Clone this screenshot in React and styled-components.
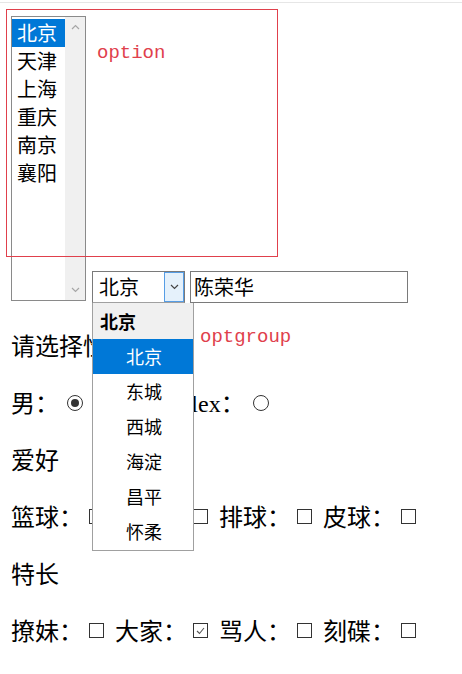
import React from 'react';
import styled, { createGlobalStyle } from 'styled-components';

const GlobalStyle = createGlobalStyle`
  body {
    margin: 0;
    background: #fff;
    color: #000;
    font-family: "Liberation Serif", "Noto Sans CJK SC", serif;
  }
`;

const cjk = `"Noto Sans CJK SC", "Microsoft YaHei", sans-serif`;

const TopRule = styled.div`
  height: 1px;
  margin-top: 2px;
  background: #e6e6e6;
`;

const Canvas = styled.div`
  position: relative;
  padding: 13px 0 0 11px;
`;

const RedBox = styled.div`
  position: absolute;
  left: 6px;
  top: 6px;
  width: 272px;
  height: 248px;
  box-sizing: border-box;
  border: 1px solid #e0404c;
  padding: 32px 0 0 90px;
  pointer-events: none;
`;

const Note = styled.span`
  font-family: "Liberation Mono", monospace;
  font-size: 19px;
  line-height: 22px;
  color: #e0404c;
`;

const FormRow = styled.div`
  display: flex;
  align-items: flex-end;
`;

const ListBox = styled.div`
  display: flex;
  width: 75px;
  height: 285px;
  box-sizing: border-box;
  border: 1px solid #8a8a8a;
  margin-bottom: 2px;
  background: #fff;
`;

const Options = styled.div`
  flex: 1;
  padding-top: 2px;
`;

const Option = styled.div`
  height: 28px;
  line-height: 28px;
  padding-left: 5px;
  font-family: ${cjk};
  font-size: 20px;
  background: ${p => (p.$selected ? '#0078d7' : 'transparent')};
  color: ${p => (p.$selected ? '#fff' : '#000')};
`;

const ScrollTrack = styled.div`
  width: 20px;
  background: #f0f0f0;
  display: flex;
  flex-direction: column;
  justify-content: space-between;
  align-items: center;
  padding: 7px 0;
  box-sizing: border-box;
`;

const SelectWrap = styled.div`
  position: relative;
  margin-left: 6px;
`;

const SelectBox = styled.div`
  display: flex;
  width: 93px;
  height: 32px;
  box-sizing: border-box;
  border: 1px solid #7a7a7a;
  border-bottom-color: #a0a0a0;
`;

const SelectValue = styled.div`
  flex: 1;
  padding-left: 6px;
  font-family: ${cjk};
  font-size: 20px;
  line-height: 30px;
`;

const ArrowButton = styled.div`
  width: 20px;
  box-sizing: border-box;
  border: 1px solid #569de5;
  background: #e5f1fb;
  display: flex;
  align-items: center;
  justify-content: center;
`;

const DropList = styled.div`
  position: absolute;
  left: 0;
  top: 100%;
  width: 102px;
  height: 248px;
  box-sizing: border-box;
  border: 1px solid #a0a0a0;
  border-top: none;
  background: #fff;
  z-index: 2;
  font-family: ${cjk};
  font-size: 18px;
`;

const GroupHead = styled.div`
  height: 36px;
  line-height: 36px;
  padding-left: 7px;
  font-weight: bold;
  background: #f0f0f0;
`;

const DropItem = styled.div`
  height: 35px;
  line-height: 35px;
  padding-left: 33px;
  background: ${p => (p.$active ? '#0078d7' : '#fff')};
  color: ${p => (p.$active ? '#fff' : '#000')};
`;

const GroupNote = styled(Note)`
  position: absolute;
  left: 107px;
  top: 23px;
  white-space: nowrap;
`;

const TextInput = styled.div`
  width: 218px;
  height: 32px;
  margin-left: 5px;
  box-sizing: border-box;
  border: 1px solid #7a7a7a;
  padding-left: 3px;
  font-family: ${cjk};
  font-size: 20px;
  line-height: 30px;
`;

const Section = styled.div`
  display: flex;
  flex-direction: column;
  gap: 24px;
  padding-top: 25px;
`;

const Line = styled.div`
  display: flex;
  align-items: center;
  height: 33px;
  font-size: 24px;
  white-space: nowrap;
`;

const Label = styled.span`
  font-family: "Liberation Serif", ${cjk};
`;

const Box = styled.span`
  display: inline-flex;
  align-items: center;
  justify-content: center;
  width: 15px;
  height: 15px;
  box-sizing: border-box;
  border: 1px solid #333;
  margin: 2px 11px 0 6px;
`;

const Radio = styled.span`
  display: inline-flex;
  align-items: center;
  justify-content: center;
  width: 16px;
  height: 16px;
  box-sizing: border-box;
  border: 1px solid #333;
  border-radius: 50%;
  margin: 2px ${p => p.$after || 11}px 0 8px;
  &::after {
    content: '';
    display: ${p => (p.$on ? 'block' : 'none')};
    width: 8px;
    height: 8px;
    border-radius: 50%;
    background: #333;
  }
`;

const Chevron = ({ up, color = '#a6a6a6' }) => (
  <svg width="9" height="6" viewBox="0 0 9 6">
    <path
      d={up ? 'M1 5 L4.5 1.5 L8 5' : 'M1 1 L4.5 4.5 L8 1'}
      fill="none"
      stroke={color}
      strokeWidth="1.2"
    />
  </svg>
);

const Checkbox = ({ on }) => (
  <Box>
    {on && (
      <svg width="9" height="8" viewBox="0 0 9 8">
        <path d="M1 4 L3.5 6.5 L8 1" fill="none" stroke="#555" strokeWidth="1.1" />
      </svg>
    )}
  </Box>
);

const cities = ['北京', '天津', '上海', '重庆', '南京', '襄阳'];
const districts = ['北京', '东城', '西城', '海淀', '昌平', '怀柔'];

export default function App() {
  return (
    <>
      <GlobalStyle />
      <TopRule />
      <Canvas>
        <FormRow>
          <ListBox>
            <Options>
              {cities.map((c, i) => (
                <Option key={c} $selected={i === 0}>{c}</Option>
              ))}
            </Options>
            <ScrollTrack>
              <Chevron up />
              <Chevron />
            </ScrollTrack>
          </ListBox>

          <SelectWrap>
            <SelectBox>
              <SelectValue>北京</SelectValue>
              <ArrowButton>
                <Chevron color="#444" />
              </ArrowButton>
            </SelectBox>
            <DropList>
              <GroupHead>北京</GroupHead>
              {districts.map((d, i) => (
                <DropItem key={d + i} $active={i === 0}>{d}</DropItem>
              ))}
              <GroupNote>optgroup</GroupNote>
            </DropList>
          </SelectWrap>

          <TextInput>陈荣华</TextInput>
        </FormRow>

        <Section>
          <Line><Label>请选择性别</Label></Line>
          <Line>
            <Label>男：</Label><Radio $on />
            <Label>女：</Label><Radio $after={12} />
            <Label>Flex：</Label><Radio />
          </Line>
          <Line><Label>爱好</Label></Line>
          <Line>
            <Label>篮球：</Label><Checkbox />
            <Label>足球：</Label><Checkbox />
            <Label>排球：</Label><Checkbox />
            <Label>皮球：</Label><Checkbox />
          </Line>
          <Line><Label>特长</Label></Line>
          <Line>
            <Label>撩妹：</Label><Checkbox />
            <Label>大家：</Label><Checkbox on />
            <Label>骂人：</Label><Checkbox />
            <Label>刻碟：</Label><Checkbox />
          </Line>
        </Section>

        <RedBox>
          <Note>option</Note>
        </RedBox>
      </Canvas>
    </>
  );
}
